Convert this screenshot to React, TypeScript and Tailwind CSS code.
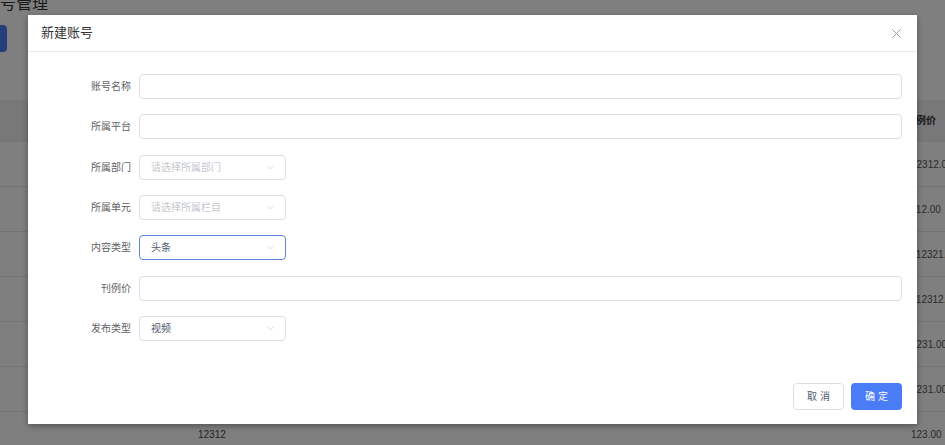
import { ChevronDown } from "lucide-react";

const font = "font-['Liberation_Sans','Noto_Sans_CJK_SC',sans-serif]";

const rows = [
  { a: "", price: "12312.00" },
  { a: "", price: "112.00" },
  { a: "", price: "112321.00" },
  { a: "", price: "112312.00" },
  { a: "", price: "1231.00" },
  { a: "", price: "1231.00" },
  { a: "12312", price: "123.00" },
];

function Field({ label, children }: { label: string; children: React.ReactNode }) {
  return (
    <div className="flex items-center h-[25px]">
      <label className="w-[88px] shrink-0 text-right text-[10px] text-[#606266]">{label}</label>
      <div className="ml-[8px] flex-1 flex">{children}</div>
    </div>
  );
}

function TextInput() {
  return <div className="h-[25px] w-full border border-[#dcdee2] rounded-[4px] bg-white" />;
}

function Select({ value, placeholder, focused }: { value?: string; placeholder?: string; focused?: boolean }) {
  return (
    <div
      className={
        "h-[25px] w-[147px] rounded-[4px] bg-white flex items-center pl-[11px] pr-[9px] text-[10px] border " +
        (focused ? "border-[#5a86e0]" : "border-[#dcdee2]")
      }
    >
      <span className={"flex-1 " + (value ? "text-[#515a6e]" : "text-[#c5c8ce]")}>{value ?? placeholder}</span>
      <ChevronDown size={11} strokeWidth={1.2} className="text-[#b8bcc4]" />
    </div>
  );
}

export default function App() {
  return (
    <div className={"relative w-[945px] h-[445px] overflow-hidden bg-white " + font}>
      {/* page behind the dialog */}
      <div className="-ml-[16px]">
        <h2 className="text-[16px] leading-[16px] -mt-[4px] text-[#333]">账号管理</h2>
        <div className="mt-[13px] -ml-[44px] w-[67px] h-[27px] rounded-[4px] bg-[#4b7cf8]" />
      </div>
      <div className="mt-[48px] text-[10px] text-[#333]">
        <div className="h-[42px] bg-[#f0f0f0] border-b border-[#e8e8e8] flex items-center">
          <span className="ml-[906px] font-bold whitespace-nowrap">刊例价</span>
        </div>
        {rows.map((r, i) => (
          <div key={i} className="h-[45px] border-b border-[#e8e8e8] flex items-center">
            <span className="w-[198px] shrink-0" />
            <span className="w-[713px] shrink-0 text-[#444]">{r.a}</span>
            <span className="whitespace-nowrap text-[#555]">{r.price}</span>
          </div>
        ))}
      </div>

      {/* overlay */}
      <div className="absolute inset-0 bg-black/50 flex justify-center items-start pt-[15px]">
        <div className="w-[889px] bg-white shadow-[0_2px_6px_rgba(0,0,0,0.35)]">
          <div className="h-[37px] border-b border-[#e8eaec] flex items-center pl-[13px] pr-[16px]">
            <span className="flex-1 text-[13px] text-[#333]">新建账号</span>
            <svg width="9" height="9" viewBox="0 0 9 9" className="text-[#999]">
              <path d="M0.5 0.5 L8.5 8.5 M8.5 0.5 L0.5 8.5" stroke="currentColor" strokeWidth="1" />
            </svg>
          </div>
          <div className="pt-[22px] pl-[15px] pr-[15px] flex flex-col gap-[15.33px]">
            <Field label="账号名称"><TextInput /></Field>
            <Field label="所属平台"><TextInput /></Field>
            <Field label="所属部门"><Select placeholder="请选择所属部门" /></Field>
            <Field label="所属单元"><Select placeholder="请选择所属栏目" /></Field>
            <Field label="内容类型"><Select value="头条" focused /></Field>
            <Field label="刊例价"><TextInput /></Field>
            <Field label="发布类型"><Select value="视频" /></Field>
          </div>
          <div className="pt-[42px] pb-[14px] pr-[15px] flex justify-end gap-[7px]">
            <button className="w-[51px] h-[27px] rounded-[4px] border border-[#dcdee2] bg-white text-[10px] text-[#515a6e] tracking-[3px] pl-[3px]">
              取消
            </button>
            <button className="w-[51px] h-[27px] rounded-[4px] bg-[#4b7cf8] text-[10px] text-white tracking-[3px] pl-[3px]">
              确定
            </button>
          </div>
        </div>
      </div>
    </div>
  );
}
